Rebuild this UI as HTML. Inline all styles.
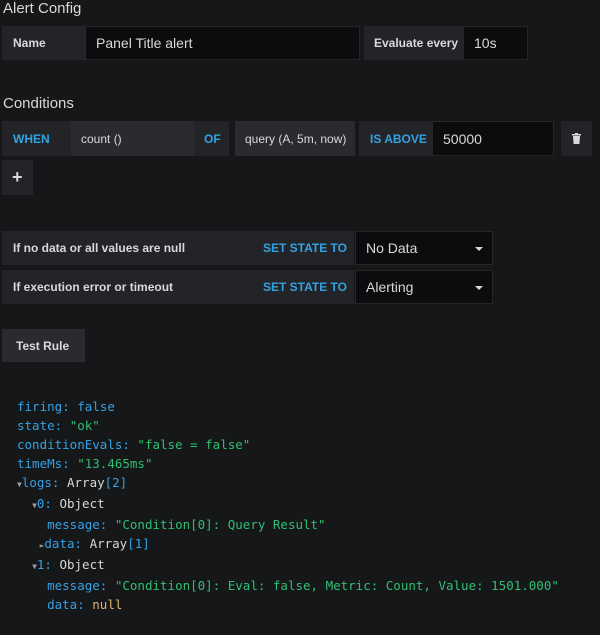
<!DOCTYPE html><html><head><style>
body{margin:0;background:#161719;width:600px;height:635px;overflow:hidden;font-family:"Liberation Sans",sans-serif;color:#d8d9da;position:relative}
.a{position:absolute;box-sizing:border-box;display:flex;align-items:center;font-size:13px}
.l{background:#232427;color:#d8d9da;padding-left:11px;font-weight:bold;font-size:12px}
.i{background:#0b0c0e;border:1px solid #262628;font-size:14px;padding-left:10px;color:#d8d9da}
.k{background:#232427;color:#33a2e5;font-weight:bold;font-size:12px;padding-left:11px}
.h{position:absolute;left:3px;font-size:15px;color:#d8d9da}
pre{position:absolute;left:17px;top:397px;margin:0;font-family:"DejaVu Sans Mono",monospace;font-size:12.5px;line-height:19px;color:#d8d9da}
.b{color:#33a2e5}.g{color:#2fbf71}.y{color:#e0b46a}.t{color:#9a9ba0;font-size:8px}
</style></head><body>
<div class="h" style="top:0">Alert Config</div>
<div class="a l" style="left:2px;top:26px;width:83px;height:34px">Name</div>
<div class="a i" style="left:85px;top:26px;width:275px;height:34px">Panel Title alert</div>
<div class="a l" style="left:364px;top:26px;width:99px;height:34px;padding-left:10px">Evaluate every</div>
<div class="a i" style="left:463px;top:26px;width:65px;height:34px">10s</div>
<div class="h" style="top:95px">Conditions</div>
<div class="a k" style="left:2px;top:121px;width:69px;height:35px">WHEN</div>
<div class="a l" style="left:71px;top:121px;width:123px;height:35px;background:#2a2b2e;padding-left:10px;font-weight:normal">count ()</div>
<div class="a k" style="left:194px;top:121px;width:35px;height:35px;padding-left:10px">OF</div>
<div class="a l" style="left:235px;top:121px;width:120px;height:35px;background:#2a2b2e;padding-left:10px;font-weight:normal">query (A, 5m, now)</div>
<div class="a k" style="left:359px;top:121px;width:73px;height:35px">IS ABOVE</div>
<div class="a i" style="left:432px;top:121px;width:122px;height:35px">50000</div>
<div class="a l" style="left:561px;top:121px;width:31px;height:35px;padding-left:11px">
<svg width="9" height="11" viewBox="0 0 9 11"><path d="M0 1h9v1.5H0zM3 0h3v1H3zM1 3h7l-.6 8H1.6z" fill="#d8d9da"/></svg></div>
<div class="a l" style="left:2px;top:160px;width:31px;height:35px;font-size:18px;padding-left:10px">+</div>
<div class="a l" style="left:2px;top:231px;width:252px;height:34px">If no data or all values are null</div>
<div class="a k" style="left:254px;top:231px;width:100px;height:34px;padding-left:9px">SET STATE TO</div>
<div class="a i" style="left:355px;top:231px;width:138px;height:34px">No Data<span style="position:absolute;right:9px;top:15px;border:4px solid transparent;border-top-color:#d8d9da;border-bottom:0"></span></div>
<div class="a l" style="left:2px;top:270px;width:252px;height:34px">If execution error or timeout</div>
<div class="a k" style="left:254px;top:270px;width:100px;height:34px;padding-left:9px">SET STATE TO</div>
<div class="a i" style="left:355px;top:270px;width:138px;height:34px">Alerting<span style="position:absolute;right:9px;top:15px;border:4px solid transparent;border-top-color:#d8d9da;border-bottom:0"></span></div>
<div class="a l" style="left:2px;top:329px;width:83px;height:33px;background:#2a2b2e;padding-left:14px">Test Rule</div>
<pre><span class="b">firing:</span> <span class="b">false</span>
<span class="b">state:</span> <span class="g">"ok"</span>
<span class="b">conditionEvals:</span> <span class="g">"false = false"</span>
<span class="b">timeMs:</span> <span class="g">"13.465ms"</span>
<span class="t">▼</span><span class="b">logs:</span> Array<span class="b">[2]</span>
  <span class="t">▼</span><span class="b">0:</span> Object
    <span class="b">message:</span> <span class="g">"Condition[0]: Query Result"</span>
   <span class="t">►</span><span class="b">data:</span> Array<span class="b">[1]</span>
  <span class="t">▼</span><span class="b">1:</span> Object
    <span class="b">message:</span> <span class="g">"Condition[0]: Eval: false, Metric: Count, Value: 1501.000"</span>
    <span class="b">data:</span> <span class="y">null</span></pre>
</body></html>
